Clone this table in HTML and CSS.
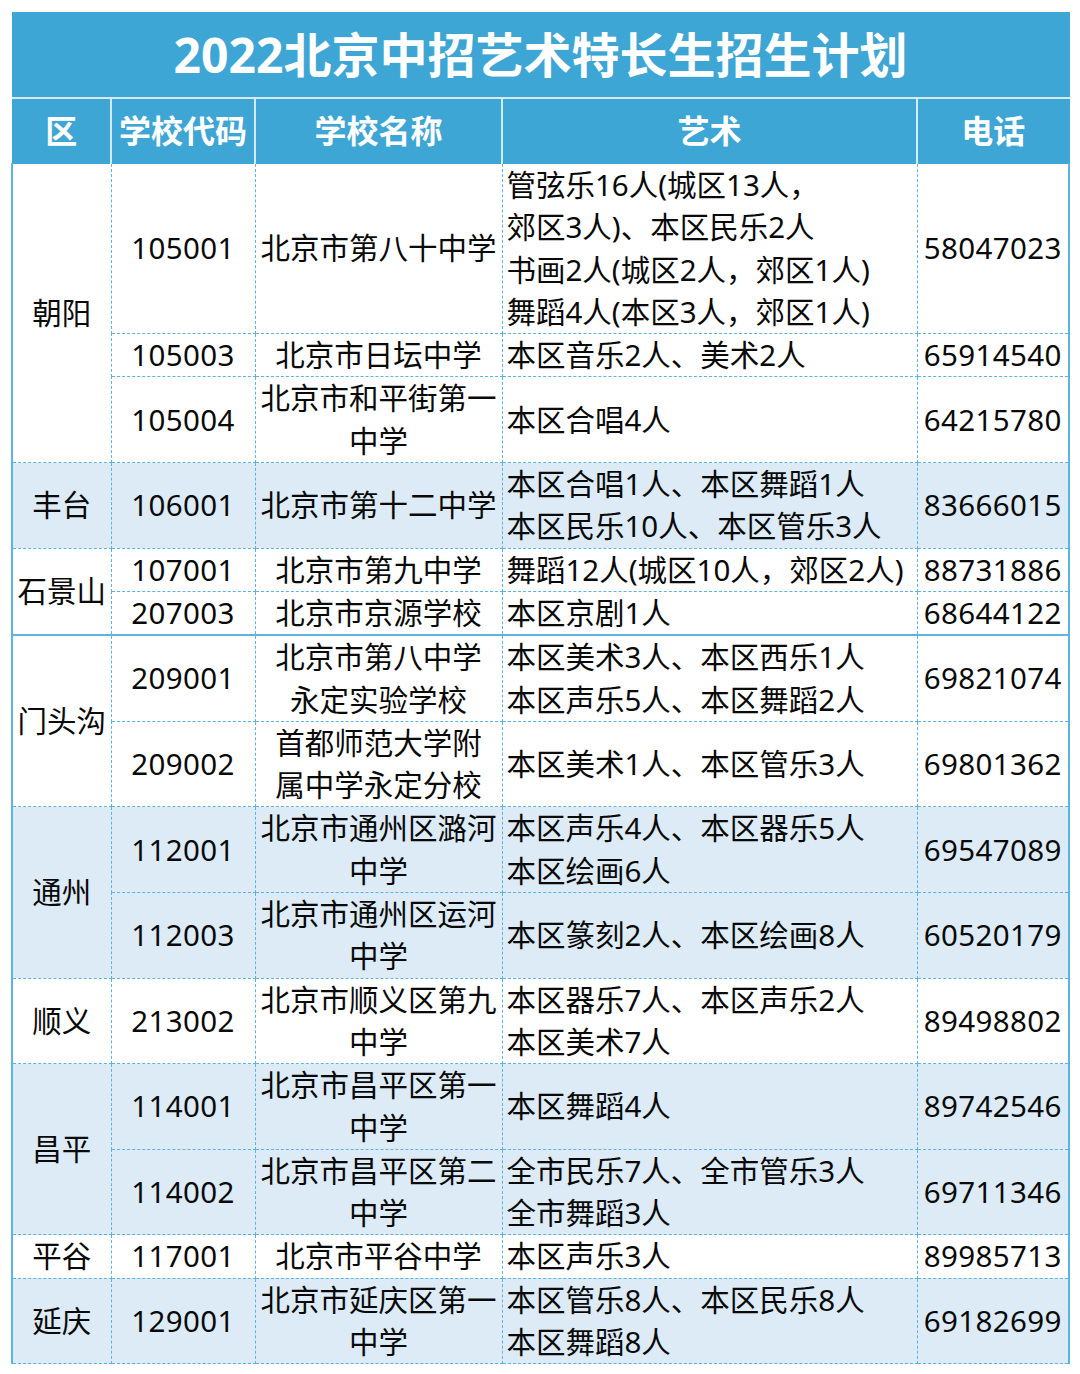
FILE: index.html
```html
<!DOCTYPE html>
<html lang="zh-CN">
<head>
<meta charset="utf-8">
<title>2022北京中招艺术特长生招生计划</title>
<link rel="stylesheet" href="styles.css">
</head>
<body>
<table class="plan">
  <colgroup>
    <col class="c-dist"><col class="c-code"><col class="c-name"><col class="c-art"><col class="c-tel">
  </colgroup>
  <thead>
    <tr><th colspan="5" class="title">2022北京中招艺术特长生招生计划</th></tr>
    <tr class="head">
      <th>区</th><th>学校代码</th><th>学校名称</th><th>艺术</th><th>电话</th>
    </tr>
  </thead>
  <tbody>
    <tr>
      <td rowspan="3" class="dist">朝阳</td>
      <td class="code">105001</td>
      <td class="name">北京市第八十中学</td>
      <td class="art">管弦乐16人(城区13人，<br>郊区3人)、本区民乐2人<br>书画2人(城区2人，郊区1人)<br>舞蹈4人(本区3人，郊区1人)</td>
      <td class="tel">58047023</td>
    </tr>
    <tr>
      <td class="code">105003</td>
      <td class="name">北京市日坛中学</td>
      <td class="art">本区音乐2人、美术2人</td>
      <td class="tel">65914540</td>
    </tr>
    <tr>
      <td class="code">105004</td>
      <td class="name">北京市和平街第一<br>中学</td>
      <td class="art">本区合唱4人</td>
      <td class="tel">64215780</td>
    </tr>

    <tr class="tint">
      <td class="dist">丰台</td>
      <td class="code">106001</td>
      <td class="name">北京市第十二中学</td>
      <td class="art">本区合唱1人、本区舞蹈1人<br>本区民乐10人、本区管乐3人</td>
      <td class="tel">83666015</td>
    </tr>

    <tr>
      <td rowspan="2" class="dist">石景山</td>
      <td class="code">107001</td>
      <td class="name">北京市第九中学</td>
      <td class="art">舞蹈12人(城区10人，郊区2人)</td>
      <td class="tel">88731886</td>
    </tr>
    <tr>
      <td class="code">207003</td>
      <td class="name">北京市京源学校</td>
      <td class="art">本区京剧1人</td>
      <td class="tel">68644122</td>
    </tr>

    <tr class="solid-top">
      <td rowspan="2" class="dist">门头沟</td>
      <td class="code">209001</td>
      <td class="name">北京市第八中学<br>永定实验学校</td>
      <td class="art">本区美术3人、本区西乐1人<br>本区声乐5人、本区舞蹈2人</td>
      <td class="tel">69821074</td>
    </tr>
    <tr>
      <td class="code">209002</td>
      <td class="name">首都师范大学附<br>属中学永定分校</td>
      <td class="art">本区美术1人、本区管乐3人</td>
      <td class="tel">69801362</td>
    </tr>

    <tr class="tint">
      <td rowspan="2" class="dist">通州</td>
      <td class="code">112001</td>
      <td class="name">北京市通州区潞河<br>中学</td>
      <td class="art">本区声乐4人、本区器乐5人<br>本区绘画6人</td>
      <td class="tel">69547089</td>
    </tr>
    <tr class="tint">
      <td class="code">112003</td>
      <td class="name">北京市通州区运河<br>中学</td>
      <td class="art">本区篆刻2人、本区绘画8人</td>
      <td class="tel">60520179</td>
    </tr>

    <tr>
      <td class="dist">顺义</td>
      <td class="code">213002</td>
      <td class="name">北京市顺义区第九<br>中学</td>
      <td class="art">本区器乐7人、本区声乐2人<br>本区美术7人</td>
      <td class="tel">89498802</td>
    </tr>

    <tr class="tint">
      <td rowspan="2" class="dist">昌平</td>
      <td class="code">114001</td>
      <td class="name">北京市昌平区第一<br>中学</td>
      <td class="art">本区舞蹈4人</td>
      <td class="tel">89742546</td>
    </tr>
    <tr class="tint">
      <td class="code">114002</td>
      <td class="name">北京市昌平区第二<br>中学</td>
      <td class="art">全市民乐7人、全市管乐3人<br>全市舞蹈3人</td>
      <td class="tel">69711346</td>
    </tr>

    <tr>
      <td class="dist">平谷</td>
      <td class="code">117001</td>
      <td class="name">北京市平谷中学</td>
      <td class="art">本区声乐3人</td>
      <td class="tel">89985713</td>
    </tr>

    <tr class="tint">
      <td class="dist">延庆</td>
      <td class="code">129001</td>
      <td class="name">北京市延庆区第一<br>中学</td>
      <td class="art">本区管乐8人、本区民乐8人<br>本区舞蹈8人</td>
      <td class="tel">69182699</td>
    </tr>
  </tbody>
</table>
</body>
</html>
```

FILE: styles.css
```css
html, body {
  margin: 0;
  padding: 0;
  background: #ffffff;
}

body {
  padding: 12px 0 0 11px;
  font-family: "Noto Sans", "Noto Sans CJK SC", sans-serif;
  color: #0a0a0a;
}

.plan {
  border-collapse: collapse;
  table-layout: fixed;
  width: 1057px;
}

.c-dist { width: 99px; }
.c-code { width: 144px; }
.c-name { width: 247px; }
.c-art  { width: 415px; }
.c-tel  { width: 152px; }

.plan th {
  background: #3ea6d5;
  color: #ffffff;
  font-weight: 700;
  padding: 0;
}

.title {
  height: 84px;
  font-size: 48px;
  line-height: 84px;
  border: 1px solid #3ea6d5;
  border-bottom: 2px solid #d4ebf7;
}

.head th {
  height: 64px;
  font-size: 32px;
  line-height: 64px;
  border-left: 2px solid #d4ebf7;
  border-bottom: 1px solid #3ea6d5;
}

.head th:first-child {
  border-left: 1px solid #3ea6d5;
}

.head th:last-child {
  border-right: 1px solid #3ea6d5;
}

.plan td {
  font-size: 29.5px;
  line-height: 42.3px;
  padding: 0;
  border: 1px dashed #5cb4e0;
  vertical-align: middle;
  text-align: center;
  white-space: nowrap;
}

.plan td.dist {
  border-left: 2px solid #5cb4e0;
}

.plan td.code {
  letter-spacing: 0.4px;
}

.plan td.tel {
  border-right: 2px solid #5cb4e0;
  letter-spacing: 0.4px;
}

.plan td.art {
  text-align: left;
  padding-left: 4px;
}

.tint td {
  background: #dcebf5;
}

.solid-top td {
  border-top: 2px solid #5cb4e0;
}
```
